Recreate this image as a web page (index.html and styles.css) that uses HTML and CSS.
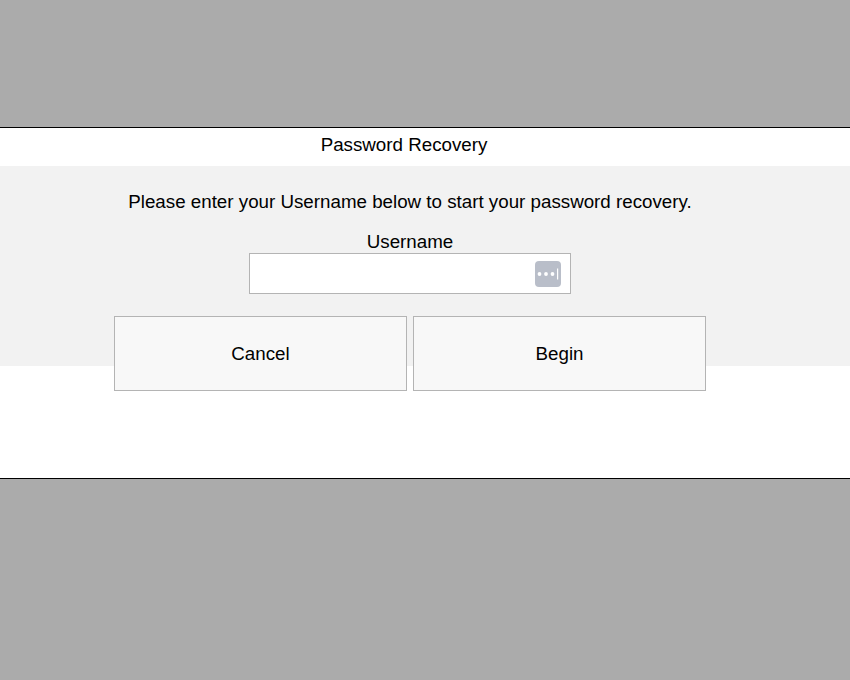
FILE: index.html
```html
<!DOCTYPE html>
<html lang="en">
<head>
    <meta charset="UTF-8">
    <meta name="viewport" content="width=device-width, initial-scale=1.0">
    <title>Password Recovery</title>
    <link rel="stylesheet" href="styles.css">
</head>
<body>
    <div class="overlay">
        <div class="dialog">
            <div class="dialog-title">Password Recovery</div>
            <div class="dialog-body">
                <p class="message">Please enter your Username below to start your password recovery.</p>
                <label class="field-label" for="username">Username</label>
                <div class="field">
                    <input class="field-input" id="username" type="text">
                    <svg class="field-icon" width="26" height="26" viewBox="0 0 26 26">
                        <rect width="26" height="26" rx="4" fill="#b9bec9"/>
                        <circle cx="4.5" cy="13" r="1.9" fill="#fff"/>
                        <circle cx="11" cy="13" r="1.9" fill="#fff"/>
                        <circle cx="17.5" cy="13" r="1.9" fill="#fff"/>
                        <rect x="22" y="7.5" width="1.2" height="11" fill="#fff"/>
                    </svg>
                </div>
                <div class="actions">
                    <button class="btn" type="button">Cancel</button>
                    <button class="btn" type="button">Begin</button>
                </div>
            </div>
        </div>
    </div>
</body>
</html>
```

FILE: styles.css
```css
body {
    font-family: "Liberation Sans", Arial, sans-serif;
    font-size: 18.75px;
    margin: 0;
    color: #000;
}

.overlay {
    height: 680px;
    padding-top: 127px;
    box-sizing: border-box;
    background-color: #ababab;
}

.dialog {
    height: 352px;
    box-sizing: border-box;
    background-color: #fff;
    border-top: 1px solid #000;
    border-bottom: 1px solid #000;
}

.dialog-title {
    height: 38px;
    padding-right: 42px;
    line-height: 33px;
    text-align: center;
}

.dialog-body {
    height: 200px;
    padding: 25px 30px 0 0;
    box-sizing: border-box;
    display: flex;
    flex-direction: column;
    align-items: center;
    background-color: #f2f2f2;
}

.message {
    margin: 0 0 18px;
    line-height: 22px;
}

.field-label {
    line-height: 22px;
}

.field {
    flex-shrink: 0;
    width: 322px;
    height: 41px;
    position: relative;
}

.field-input {
    width: 100%;
    height: 100%;
    box-sizing: border-box;
    border: 1px solid #b4b4b4;
    background-color: #fff;
    padding: 0 36px 0 8px;
    font: inherit;
    outline: none;
}

.field-icon {
    position: absolute;
    top: 8px;
    right: 10px;
}

.actions {
    flex-shrink: 0;
    display: flex;
    gap: 6px;
    margin-top: 22px;
}

.btn {
    width: 293px;
    height: 75px;
    border: 1px solid #b4b4b4;
    background-color: #f8f8f8;
    color: #000;
    font: inherit;
    padding: 0;
}
```
